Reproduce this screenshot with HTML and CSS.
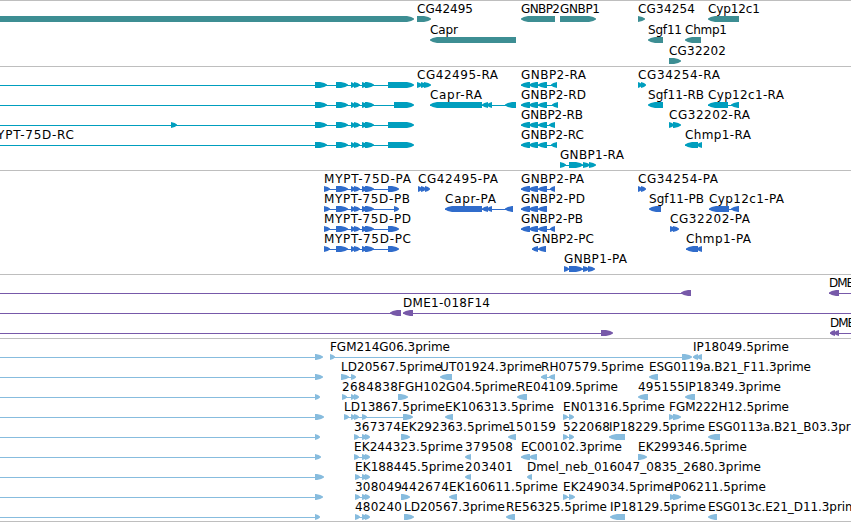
FILE: index.html
```html
<!DOCTYPE html>
<html lang="en">
  <head>
    <meta charset="utf-8" />
    <title>Genome browser</title>
    <link rel="stylesheet" href="styles.css">
  </head>
  <body>
    <div class="browser">
      <div class="track genes"><svg id="genes" width="851" height="65"></svg></div>
      <div class="track transcripts"><svg id="transcripts" width="851" height="103"></svg></div>
      <div class="track proteins"><svg id="proteins" width="851" height="103"></svg></div>
      <div class="track clones"><svg id="clones" width="851" height="63"></svg></div>
      <div class="track ests"><svg id="ests" width="851" height="182"></svg></div>
    </div>
    <script src="tracks.js"></script>
  </body>
</html>
```

FILE: styles.css
```css
body {
  margin: 0;
  background-color: #fff;
  overflow: hidden;
}

.browser {
  width: 851px;
  border-bottom: 1px solid #bebebe;
}

.track {
  border-top: 1px solid #bebebe;
  overflow: hidden;
}
.track svg {
  display: block;
}
.track text {
  font-family: "DejaVu Sans", sans-serif;
  font-size: 12px;
  fill: #000;
}

.genes {
  color: #3d8e93;
}
.transcripts {
  color: #009ebe;
}
.proteins {
  color: #306ccb;
}
.clones {
  color: #7759a9;
}
.ests {
  color: #87bcde;
}

.exon {
  fill: currentColor;
}
.intron {
  fill: currentColor;
  shape-rendering: crispEdges;
}
```

FILE: tracks.js
```js
var NS = 'http://www.w3.org/2000/svg';

// exons shared by the MYPT-75D and GNBP2 isoforms
var M = [336, 348, 351, 355, 354, 360, 362, 367, 365, 374];
var G = [521, 530, 529, 538, 538, 547];

// each feature: row, strand, label, label width, exon start/end pairs
var genes = [
  [0, 1, '', 0, [-20, 414]],
  [0, 1, 'CG42495', 56, [417, 431]],
  [0, -1, 'GNBP2', 39, [521, 555]],
  [0, 1, 'GNBP1', 40, [560, 596]],
  [0, 1, 'CG34254', 57, [638, 645]],
  [0, -1, 'Cyp12c1', 52, [708, 739]],
  [1, -1, 'Capr', 28, [430, 516]],
  [1, -1, 'Sgf11', 34, [648, 663]],
  [1, -1, 'Chmp1', 42, [685, 701]],
  [2, 1, 'CG32202', 57, [669, 681]]
];

var transcripts = [
  [0, 1, '', 0, [-20, -13, 315, 327].concat(M, [388, 414])],
  [0, 1, 'CG42495-RA', 81, [417, 422, 421, 426, 424, 431]],
  [0, -1, 'GNBP2-RA', 65, G.concat([551, 557])],
  [0, 1, 'CG34254-RA', 82, [638, 642, 641, 646]],
  [1, 1, '', 0, [-20, -13, 315, 327].concat(M, [394, 414])],
  [1, -1, 'Capr-RA', 52, [430, 482, 482, 488, 487, 492, 505, 516]],
  [1, -1, 'GNBP2-RD', 65, G.concat([552, 558])],
  [1, -1, 'Sgf11-RB', 56, [648, 663]],
  [1, -1, 'Cyp12c1-RA', 76, [708, 728, 731, 739]],
  [2, 1, '', 0, [-20, -13, 171, 177, 315, 327].concat(M, [388, 414])],
  [2, -1, 'GNBP2-RB', 62, G.concat([549, 555])],
  [2, 1, 'CG32202-RA', 81, [669, 674, 673, 681]],
  [3, 1, 'MYPT-75D-RC', 88, [-14, -6, 315, 327].concat(M, [388, 414])],
  [3, -1, 'GNBP2-RC', 63, G.concat([551, 557])],
  [3, -1, 'Chmp1-RA', 66, [685, 698, 697, 702]],
  [4, 1, 'GNBP1-RA', 64, [560, 566, 569, 583, 583, 590, 589, 596]]
];

var proteins = [
  [0, 1, 'MYPT-75D-PA', 87, [324, 330].concat(M, [388, 399])],
  [0, 1, 'CG42495-PA', 80, [418, 422, 421, 426, 425, 430]],
  [0, -1, 'GNBP2-PA', 63, G.concat([550, 555])],
  [0, 1, 'CG34254-PA', 80, [638, 642, 641, 646]],
  [1, 1, 'MYPT-75D-PB', 86, [324, 330].concat(M, [394, 399])],
  [1, -1, 'Capr-PA', 51, [445, 482, 482, 488, 487, 492, 505, 513]],
  [1, -1, 'GNBP2-PD', 64, G],
  [1, -1, 'Sgf11-PB', 55, [649, 661]],
  [1, -1, 'Cyp12c1-PA', 75, [709, 729, 731, 739]],
  [2, 1, 'MYPT-75D-PD', 87, [324, 330].concat(M, [388, 399])],
  [2, -1, 'GNBP2-PB', 62, G.concat([550, 555])],
  [2, 1, 'CG32202-PA', 80, [670, 675, 673, 679]],
  [3, 1, 'MYPT-75D-PC', 87, [324, 330].concat(M, [388, 399])],
  [3, -1, 'GNBP2-PC', 62, [532, 538, 538, 546]],
  [3, -1, 'Chmp1-PA', 65, [686, 698, 697, 702]],
  [4, 1, 'GNBP1-PA', 63, [564, 569, 569, 583, 583, 589, 588, 595]]
];

var clones = [
  [0, -1, '', 0, [-20, -10, 681, 691]],
  [0, -1, 'DME', 25, [829, 839, 870, 880]],
  [1, -1, '', 0, [-20, -10, 390, 401]],
  [1, -1, 'DME1-018F14', 87, [403, 413, 870, 880]],
  [2, 1, '', 0, [-20, -10, 601, 613]],
  [2, -1, 'DME', 25, [830, 835, 834, 839, 870, 880]]
];

var ests = [
  [0, 1, '', 0, [-20, -10, 315, 323]],
  [0, 1, 'FGM214G06.3prime', 120, [330, 335, 682, 692]],
  [0, -1, 'IP18049.5prime', 96, [693, 698, 697, 702]],
  [1, 1, '', 0, [-20, -10, 315, 323]],
  [1, 1, 'LD20567.5prime', 101, [341, 349, 351, 356]],
  [1, -1, 'UT01924.3prime', 102, [440, 452]],
  [1, -1, 'RH07579.5prime', 103, [541, 547, 549, 555]],
  [1, -1, 'ESG0119a.B21_F11.3prime', 162, [649, 658]],
  [2, 1, '', 0, [-20, -10, 315, 320]],
  [2, 1, '2684838', 56, [342, 347, 351, 355, 354, 359]],
  [2, 1, 'FGH102G04.5prime', 119, [398, 408]],
  [2, -1, 'RE04109.5prime', 101, [517, 527]],
  [2, -1, '495155', 47, [638, 648]],
  [2, -1, 'IP18349.3prime', 96, [685, 695]],
  [3, 1, '', 0, [-20, -10, 315, 324]],
  [3, 1, 'LD13867.5prime', 101, [344, 349, 351, 355, 354, 359, 362, 367, 403, 413]],
  [3, -1, 'EK106313.5prime', 109, [445, 453]],
  [3, 1, 'EN01316.5prime', 102, [563, 568, 569, 574]],
  [3, 1, 'FGM222H12.5prime', 120, [669, 674, 673, 681]],
  [4, 1, '', 0, [-20, -10, 315, 320]],
  [4, 1, '367374', 47, [354, 359, 362, 367, 365, 370]],
  [4, 1, 'EK292363.5prime', 109, [401, 410]],
  [4, -1, '150159', 48, [508, 516]],
  [4, 1, '522068', 47, [563, 568, 569, 574]],
  [4, -1, 'IP18229.5prime', 96, [609, 625]],
  [4, -1, 'ESG0113a.B21_B03.3prime', 165, [708, 720]],
  [5, 1, '', 0, [-20, -10, 315, 321]],
  [5, 1, 'EK244323.5prime', 109, [354, 359, 362, 367, 365, 370]],
  [5, -1, '379508', 48, [465, 471]],
  [5, -1, 'EC00102.3prime', 101, [521, 530, 529, 537]],
  [5, 1, 'EK299346.5prime', 109, [638, 647]],
  [6, 1, '', 0, [-20, -10, 315, 324]],
  [6, 1, 'EK188445.5prime', 109, [355, 360, 362, 367, 365, 370]],
  [6, -1, '203401', 48, [465, 471]],
  [6, -1, 'Dmel_neb_016047_0835_2680.3prime', 234, [527, 532]],
  [7, 1, '', 0, [-20, -10, 315, 323]],
  [7, 1, '308049', 47, [355, 360, 362, 367, 365, 370]],
  [7, 1, '442674', 48, [401, 410]],
  [7, -1, 'EK160611.5prime', 109, [449, 457]],
  [7, 1, 'EK249034.5prime', 109, [563, 568, 569, 575]],
  [7, 1, 'IP06211.5prime', 96, [670, 675, 673, 681]],
  [8, 1, '', 0, [-20, -10, 315, 320]],
  [8, 1, '480240', 47, [355, 360, 362, 367, 365, 370]],
  [8, 1, 'LD20567.3prime', 101, [404, 414]],
  [8, -1, 'RE56325.5prime', 101, [506, 515]],
  [8, -1, 'IP18129.5prime', 96, [610, 625]],
  [8, -1, 'ESG013c.E21_D11.3prime', 156, [708, 717]]
];

function add(svg, tag, attrs) {
  var el = document.createElementNS(NS, tag);
  for (var key in attrs) {
    el.setAttribute(key, attrs[key]);
  }
  svg.appendChild(el);
  return el;
}

function arrow(start, end, strand, y) {
  var head = Math.min(7, end - start);
  var tip = strand > 0 ? end : start;
  var back = strand > 0 ? start : end;
  var neck = tip - strand * head;
  var mid = tip - strand * head * 0.4;
  return [
    [back, y - 3], [neck, y - 3], [mid, y - 2], [tip, y - 0.5],
    [tip, y + 0.5], [mid, y + 2], [neck, y + 3], [back, y + 3]
  ].join(' ');
}

function draw(id, features, pitch) {
  var svg = document.getElementById(id);
  features.forEach(function(f) {
    var top = f[0] * pitch;
    var exons = f[4];
    var y = top + 18;
    if (exons.length > 2) {
      add(svg, 'rect', {
        class: 'intron',
        x: exons[0],
        y: y,
        width: exons[exons.length - 1] - exons[0] - 2,
        height: 1
      });
    }
    for (var i = 0; i < exons.length; i += 2) {
      add(svg, 'polygon', {
        class: 'exon',
        points: arrow(exons[i], exons[i + 1], f[1], y)
      });
    }
    if (f[2]) {
      add(svg, 'text', {
        x: exons[0],
        y: top + 12,
        textLength: f[3],
        lengthAdjust: 'spacing'
      }).textContent = f[2];
    }
  });
}

draw('genes', genes, 21);
draw('transcripts', transcripts, 20);
draw('proteins', proteins, 20);
draw('clones', clones, 20);
draw('ests', ests, 20);
```
